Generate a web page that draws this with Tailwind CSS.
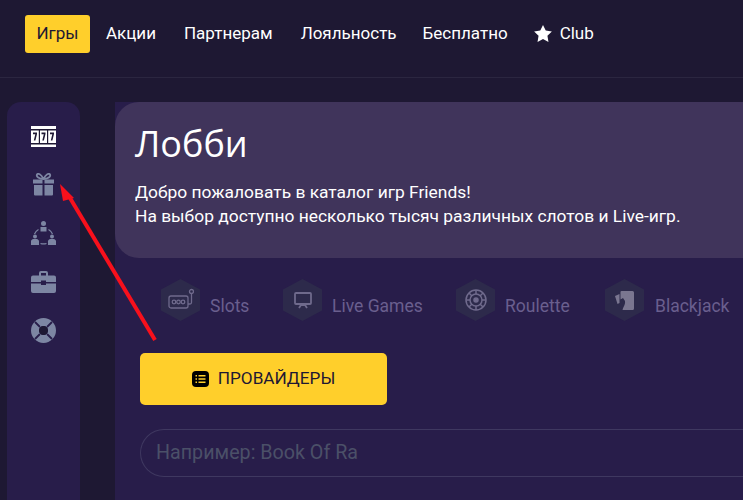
<!DOCTYPE html>
<html lang="ru">
<head>
    <meta charset="UTF-8">
    <title>Friends</title>
    <script src="https://cdn.jsdelivr.net/npm/@tailwindcss/browser@4"></script>
</head>
<body class="bg-[#1e1833] font-['Roboto',sans-serif] w-[743px] h-[500px] overflow-hidden relative">
    <!-- Header -->
    <header class="h-[78px] border-b border-[#2b2640] pl-[25px] pt-[15px]">
        <nav class="flex items-center text-white text-[17px] h-[38px]">
            <a href="#" class="bg-[#ffcf2b] text-[#1e1833] rounded-[3px] w-[65px] h-[38px] flex items-center justify-center">Игры</a>
            <a href="#" class="ml-[16px]">Акции</a>
            <a href="#" class="ml-[28px]">Партнерам</a>
            <a href="#" class="ml-[28px]">Лояльность</a>
            <a href="#" class="ml-[26px]">Бесплатно</a>
            <a href="#" class="ml-[26px] flex items-center gap-[8px]">
                <svg class="-mt-[2px]" width="18" height="17" viewBox="0 0 24 23" fill="#fff"><path d="M12 0l3.7 7.6 8.3 1.2-6 5.9 1.4 8.3L12 19.1l-7.4 3.9L6 14.7 0 8.8l8.3-1.2z"/></svg>
                Club
            </a>
        </nav>
    </header>

    <div class="flex pl-[7px] pt-[24px]">
        <!-- Sidebar -->
        <aside class="w-[73px] h-[400px] bg-[#281d4a] rounded-t-[14px] pt-[10px] shrink-0">
            <div class="h-[48.5px] flex items-center justify-center">
                <svg width="25" height="21" viewBox="0 0 25 21"><rect width="25" height="21" fill="#fff"/><rect y="3" width="25" height="1.500" fill="#1e1833"/><rect y="17" width="25" height="1.500" fill="#1e1833"/><rect x="7.800" y="4" width="1.200" height="13" fill="#1e1833"/><rect x="16" y="4" width="1.200" height="13" fill="#1e1833"/><path d="M2 6.500h4v1.500L4.400 14.500H2.800L4.300 8.200H2zM10.500 6.500h4v1.500L12.900 14.500h-1.600l1.500-6.300h-2.300zM19 6.500h4v1.500L21.400 14.500h-1.600l1.500-6.300H19z" fill="#1e1833"/></svg>
            </div>
            <div class="h-[48.5px] flex items-center justify-center">
                <svg width="23" height="23" viewBox="0 0 23 23" fill="#7d86a3"><path d="M1 6.500h9.500v4H1zM12.500 6.500H22v4h-9.500zM2 12h8.500v10.500H3a1 1 0 0 1-1-1zM12.500 12H21v9.500a1 1 0 0 1-1 1h-7.500z"/><path d="M11.500 6C9 1 6 0 5 1.500 4 3.500 7 6 11.500 6zM11.500 6C14 1 17 0 18 1.500 19 3.500 16 6 11.500 6z" fill="none" stroke="#7d86a3" stroke-width="1.800"/></svg>
            </div>
            <div class="h-[48.5px] flex items-center justify-center">
                <svg width="25" height="25" viewBox="0 0 25 25" fill="#7d86a3"><circle cx="12.500" cy="2.500" r="2.500"/><path d="M9.500 6h6v4.500h-6z"/><circle cx="4" cy="15.500" r="2"/><circle cx="21" cy="15.500" r="2"/><path d="M0 24v-3a2.500 2.500 0 0 1 2.500-3h3A2.500 2.500 0 0 1 8 21v3zM17 24v-3a2.500 2.500 0 0 1 2.500-3h3A2.500 2.500 0 0 1 25 21v3z"/><path d="M7.500 8.500A10 10 0 0 0 3.500 13M17.500 8.500a10 10 0 0 1 4 4.500M9.500 22.500a10 10 0 0 0 6 0" fill="none" stroke="#7d86a3" stroke-width="1.200"/></svg>
            </div>
            <div class="h-[48.5px] flex items-center justify-center">
                <svg width="25" height="22" viewBox="0 0 25 22" fill="#7d86a3"><path d="M8 5V2a2 2 0 0 1 2-2h5a2 2 0 0 1 2 2v3h-2V2h-5v3z"/><path d="M2 4.500h21a2 2 0 0 1 2 2V11H15V9.500h-5V11H0V6.500a2 2 0 0 1 2-2z"/><path d="M0 12.500h10V14h5v-1.500h10V20a2 2 0 0 1-2 2H2a2 2 0 0 1-2-2z"/></svg>
            </div>
            <div class="h-[48.5px] flex items-center justify-center">
                <svg width="25" height="25" viewBox="0 0 25 25"><circle cx="12.500" cy="12.500" r="8.500" fill="none" stroke="#7d86a3" stroke-width="8"/><circle cx="12.500" cy="12.500" r="4.500" fill="#1e1833"/><path d="M4 4l5 5M21 4l-5 5M4 21l5-5M21 21l-5-5" stroke="#281d4a" stroke-width="1.800"/></svg>
            </div>
        </aside>

        <!-- Main -->
        <main class="ml-[35px] w-[628px] h-[400px] bg-[#281d4a] shrink-0">
            <section class="bg-[#40345b] h-[156px] rounded-l-[24px] pl-[20px] pt-[18px] text-white">
                <h1 class="text-[36px] leading-[47px] font-normal font-['Open_Sans',sans-serif]">Лобби</h1>
                <p class="mt-[13px] text-[17.4px] leading-[24px] whitespace-nowrap">Добро пожаловать в каталог игр Friends!<br>На выбор доступно несколько тысяч различных слотов и Live-игр.</p>
            </section>

            <!-- Game categories -->
            <div class="flex items-center mt-[20px] pl-[46px] text-[17.5px] text-[#6a5f8e] h-[44px]">
                <div class="flex items-center w-[122px] gap-[10px]">
                    <div class="w-[39px] h-[42px] bg-[#2d2a4b] [clip-path:polygon(50%_0,100%_25%,100%_75%,50%_100%,0_75%,0_25%)] flex items-center justify-center shrink-0">
                        <svg width="26" height="24" viewBox="0 0 26 24" fill="none" stroke="#6f6a8c" stroke-width="1.300"><rect x="1" y="8" width="19" height="12" rx="2"/><circle cx="6" cy="14" r="1.800"/><circle cx="10.500" cy="14" r="1.800"/><circle cx="15" cy="14" r="1.800"/><path d="M20 16h2a1.500 1.500 0 0 0 1.500-1.500V6"/><circle cx="23.500" cy="3.500" r="2"/></svg>
                    </div>
                    <span class="mt-[12px]">Slots</span>
                </div>
                <div class="flex items-center w-[173px] gap-[10px]">
                    <div class="w-[39px] h-[42px] bg-[#2d2a4b] [clip-path:polygon(50%_0,100%_25%,100%_75%,50%_100%,0_75%,0_25%)] flex items-center justify-center shrink-0">
                        <svg width="18" height="17" viewBox="0 0 18 17" fill="none" stroke="#6f6a8c" stroke-width="1.800"><rect x="1" y="1" width="16" height="11" rx="1"/><path d="M5 16l2-3h4l2 3"/></svg>
                    </div>
                    <span class="mt-[12px]">Live Games</span>
                </div>
                <div class="flex items-center w-[149px] gap-[10px]">
                    <div class="w-[39px] h-[42px] bg-[#2d2a4b] [clip-path:polygon(50%_0,100%_25%,100%_75%,50%_100%,0_75%,0_25%)] flex items-center justify-center shrink-0">
                        <svg width="22" height="22" viewBox="0 0 22 22" fill="none" stroke="#6f6a8c" stroke-width="1.500"><circle cx="11" cy="11" r="10"/><circle cx="11" cy="11" r="6"/><circle cx="11" cy="11" r="2" fill="#6f6a8c"/><path d="M11 1v4M11 17v4M1 11h4M17 11h4M4 4l3 3M18 4l-3 3M4 18l3-3M18 18l-3-3"/></svg>
                    </div>
                    <span class="mt-[12px]">Roulette</span>
                </div>
                <div class="flex items-center gap-[11px]">
                    <div class="w-[39px] h-[42px] bg-[#2d2a4b] [clip-path:polygon(50%_0,100%_25%,100%_75%,50%_100%,0_75%,0_25%)] flex items-center justify-center shrink-0">
                        <svg width="19" height="19" viewBox="0 0 19 19"><path d="M4.500 3L0 5l2.500 8 2-1z" fill="#7a7690"/><path d="M6.500 0H17.500A1.500 1.500 0 0 1 19 1.500V17.500A1.500 1.500 0 0 1 17.500 19H7.500C8.500 15 10.500 14 10 10L8 7 5.500 8.500V1A1 1 0 0 1 6.500 0z" fill="#7a7690"/></svg>
                    </div>
                    <span class="mt-[12px] whitespace-nowrap">Blackjack</span>
                </div>
            </div>

            <!-- Providers -->
            <button class="ml-[25px] mt-[31px] w-[247px] h-[52px] bg-[#ffcf2b] rounded-[5px] flex items-center justify-center gap-[9px] text-[17.2px] text-[#1e1833]">
                <svg width="17" height="16" viewBox="0 0 17 16"><rect width="17" height="16" rx="4" fill="#000"/><path d="M3.500 4h1.500v1.500H3.500zM6.500 4H13.500v1.500H6.500zM3.500 7.200h1.500v1.500H3.500zM6.500 7.200H13.500v1.500H6.500zM3.500 10.500h1.500V12H3.500zM6.500 10.500H13.500V12H6.500z" fill="#ffcf2b"/></svg>
                ПРОВАЙДЕРЫ
            </button>

            <!-- Search -->
            <div class="ml-[25px] mt-[24px] h-[48px] border border-r-0 border-[#3f3860] rounded-l-[24px] flex items-center pl-[15px] text-[19.7px] text-[#4b5068]">Например: Book Of Ra</div>
        </main>
    </div>

    <!-- Annotation arrow -->
    <svg class="absolute left-0 top-0 pointer-events-none" width="743" height="500" viewBox="0 0 743 500"><path d="M155 340L70 198" stroke="#f8101c" stroke-width="4" fill="none"/><path d="M60 184l14 14-11 3z" fill="#f8101c"/></svg>
</body>
</html>
